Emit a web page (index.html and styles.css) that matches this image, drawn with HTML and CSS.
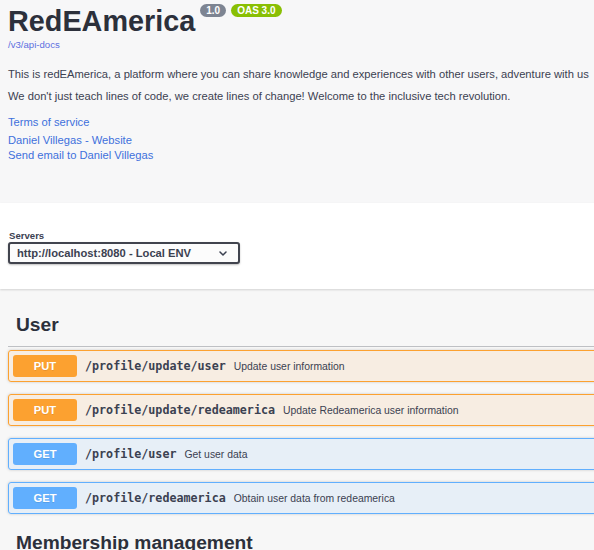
FILE: index.html
```html
<!DOCTYPE html>
<html lang="en">
<head>
<meta charset="utf-8">
<title>RedEAmerica</title>
<link rel="stylesheet" href="styles.css">
</head>
<body>
<div class="page">
  <section class="info">
    <div class="title-row">
      <h1 class="title">RedEAmerica</h1>
      <span class="badge badge-version">1.0</span>
      <span class="badge badge-oas">OAS 3.0</span>
    </div>
    <a class="spec-url" href="#">/v3/api-docs</a>
    <div class="description">
      <p>This is redEAmerica, a platform where you can share knowledge and experiences with other users, adventure with us</p>
      <p>We don't just teach lines of code, we create lines of change! Welcome to the inclusive tech revolution.</p>
    </div>
    <div class="tos"><a class="info-link" href="#">Terms of service</a></div>
    <div class="contact">
      <a class="info-link" href="#">Daniel Villegas - Website</a>
      <a class="info-link" href="#">Send email to Daniel Villegas</a>
    </div>
  </section>

  <section class="servers">
    <span class="servers-label">Servers</span>
    <div class="select">
      <span>http://localhost:8080 - Local ENV</span>
      <svg class="chevron" width="8" height="5" viewBox="0 0 8 5"><path d="M1 1l3 3 3-3" fill="none" stroke="#3b4151" stroke-width="1.5" stroke-linecap="round" stroke-linejoin="round"/></svg>
    </div>
  </section>

  <section class="operations">
    <div class="tag">
      <h2 class="tag-heading">User</h2>
      <div class="op-list">
        <div class="opblock opblock-put">
          <span class="method method-put">PUT</span>
          <span class="path">/profile/update/user</span>
          <span class="summary-desc">Update user information</span>
        </div>
        <div class="opblock opblock-put">
          <span class="method method-put">PUT</span>
          <span class="path">/profile/update/redeamerica</span>
          <span class="summary-desc">Update Redeamerica user information</span>
        </div>
        <div class="opblock opblock-get">
          <span class="method method-get">GET</span>
          <span class="path">/profile/user</span>
          <span class="summary-desc">Get user data</span>
        </div>
        <div class="opblock opblock-get">
          <span class="method method-get">GET</span>
          <span class="path">/profile/redeamerica</span>
          <span class="summary-desc">Obtain user data from redeamerica</span>
        </div>
      </div>
    </div>
    <div class="tag">
      <h2 class="tag-heading">Membership management</h2>
    </div>
  </section>
</div>
</body>
</html>
```

FILE: styles.css
```css
html, body {
  margin: 0;
  padding: 0;
  height: 550px;
  overflow: hidden;
}

body {
  font-family: "Liberation Sans", Arial, sans-serif;
  color: #3b4151;
  background: #f7f7f7;
}

.page {
  width: 640px;
}

/* ---------- info ---------- */
.info {
  background: #f7f7f8;
  height: 203px;
  box-sizing: border-box;
  padding: 3px 8px 0;
}

.title-row {
  display: flex;
  align-items: flex-start;
}

.title {
  margin: 0;
  font-size: 28.8px;
  line-height: 36px;
  font-weight: 700;
  color: #2c303b;
}

.badge {
  margin-top: 1px;
  margin-left: 5px;
  height: 13px;
  line-height: 13px;
  padding: 0 6px;
  border-radius: 57px;
  font-size: 10px;
  font-weight: 700;
  color: #fff;
}

.badge-version {
  background: #7d8492;
}

.badge-oas {
  background: #89bf04;
}

.spec-url {
  display: block;
  font-size: 9.6px;
  line-height: 12px;
  color: #5d6fe0;
  text-decoration: none;
}

.description {
  margin-top: 16px;
}

.description p {
  margin: 0;
  font-size: 11.2px;
  line-height: 15px;
  white-space: nowrap;
}

.description p + p {
  margin-top: 7px;
}

.tos {
  margin-top: 11px;
}

.contact {
  margin-top: 3px;
}

.info-link {
  display: block;
  font-size: 11.2px;
  line-height: 15px;
  color: #4070dc;
  text-decoration: none;
}

/* ---------- servers ---------- */
.servers {
  position: relative;
  z-index: 1;
  background: #fff;
  height: 86px;
  box-sizing: border-box;
  padding: 27px 8px 0;
  box-shadow: 0 1px 2px rgba(0, 0, 0, 0.15);
}

.servers-label {
  display: block;
  padding-left: 1px;
  font-size: 9.6px;
  line-height: 12px;
  font-weight: 700;
}

.select {
  width: 232px;
  height: 22px;
  box-sizing: border-box;
  border: 2px solid #41444e;
  border-radius: 3px;
  background: #fcfcfc;
  box-shadow: 0 1px 2px rgba(0, 0, 0, 0.25);
  display: flex;
  align-items: center;
  justify-content: space-between;
  padding: 0 11px 0 7px;
  font-size: 11.2px;
  font-weight: 700;
  color: #3b4151;
}

.chevron {
  display: block;
}

/* ---------- operations ---------- */
.operations {
  padding: 24px 0 0 8px;
}

.tag {
  padding-bottom: 17px;
}

.tag-heading {
  margin: 0;
  padding: 0 8px 9px;
  font-size: 19.2px;
  line-height: 24px;
  font-weight: 700;
  color: #2c303b;
  border-bottom: 1px solid rgba(59, 65, 81, 0.3);
}

.op-list {
  display: flex;
  flex-direction: column;
  gap: 12px;
  margin-top: 3px;
}

.opblock {
  height: 32px;
  box-sizing: border-box;
  border: 1px solid;
  border-radius: 3px;
  padding: 0 4px;
  display: flex;
  align-items: center;
  box-shadow: 0 0 3px rgba(0, 0, 0, 0.19);
}

.opblock-put {
  border-color: #fca130;
  background: rgba(252, 161, 48, 0.1);
}

.opblock-get {
  border-color: #61affe;
  background: rgba(97, 175, 254, 0.1);
}

.method {
  flex: none;
  width: 64px;
  height: 22px;
  line-height: 22px;
  border-radius: 3px;
  text-align: center;
  color: #fff;
  font-size: 11.2px;
  font-weight: 700;
  text-shadow: 0 1px 0 rgba(0, 0, 0, 0.1);
}

.method-put {
  background: #fca130;
}

.method-get {
  background: #61affe;
}

.path {
  padding: 0 8px;
  font-family: "DejaVu Sans Mono", "Liberation Mono", monospace;
  font-size: 11.7px;
  font-weight: 700;
  color: #3b4151;
}

.summary-desc {
  font-size: 10.4px;
  color: #3b4151;
}
```
